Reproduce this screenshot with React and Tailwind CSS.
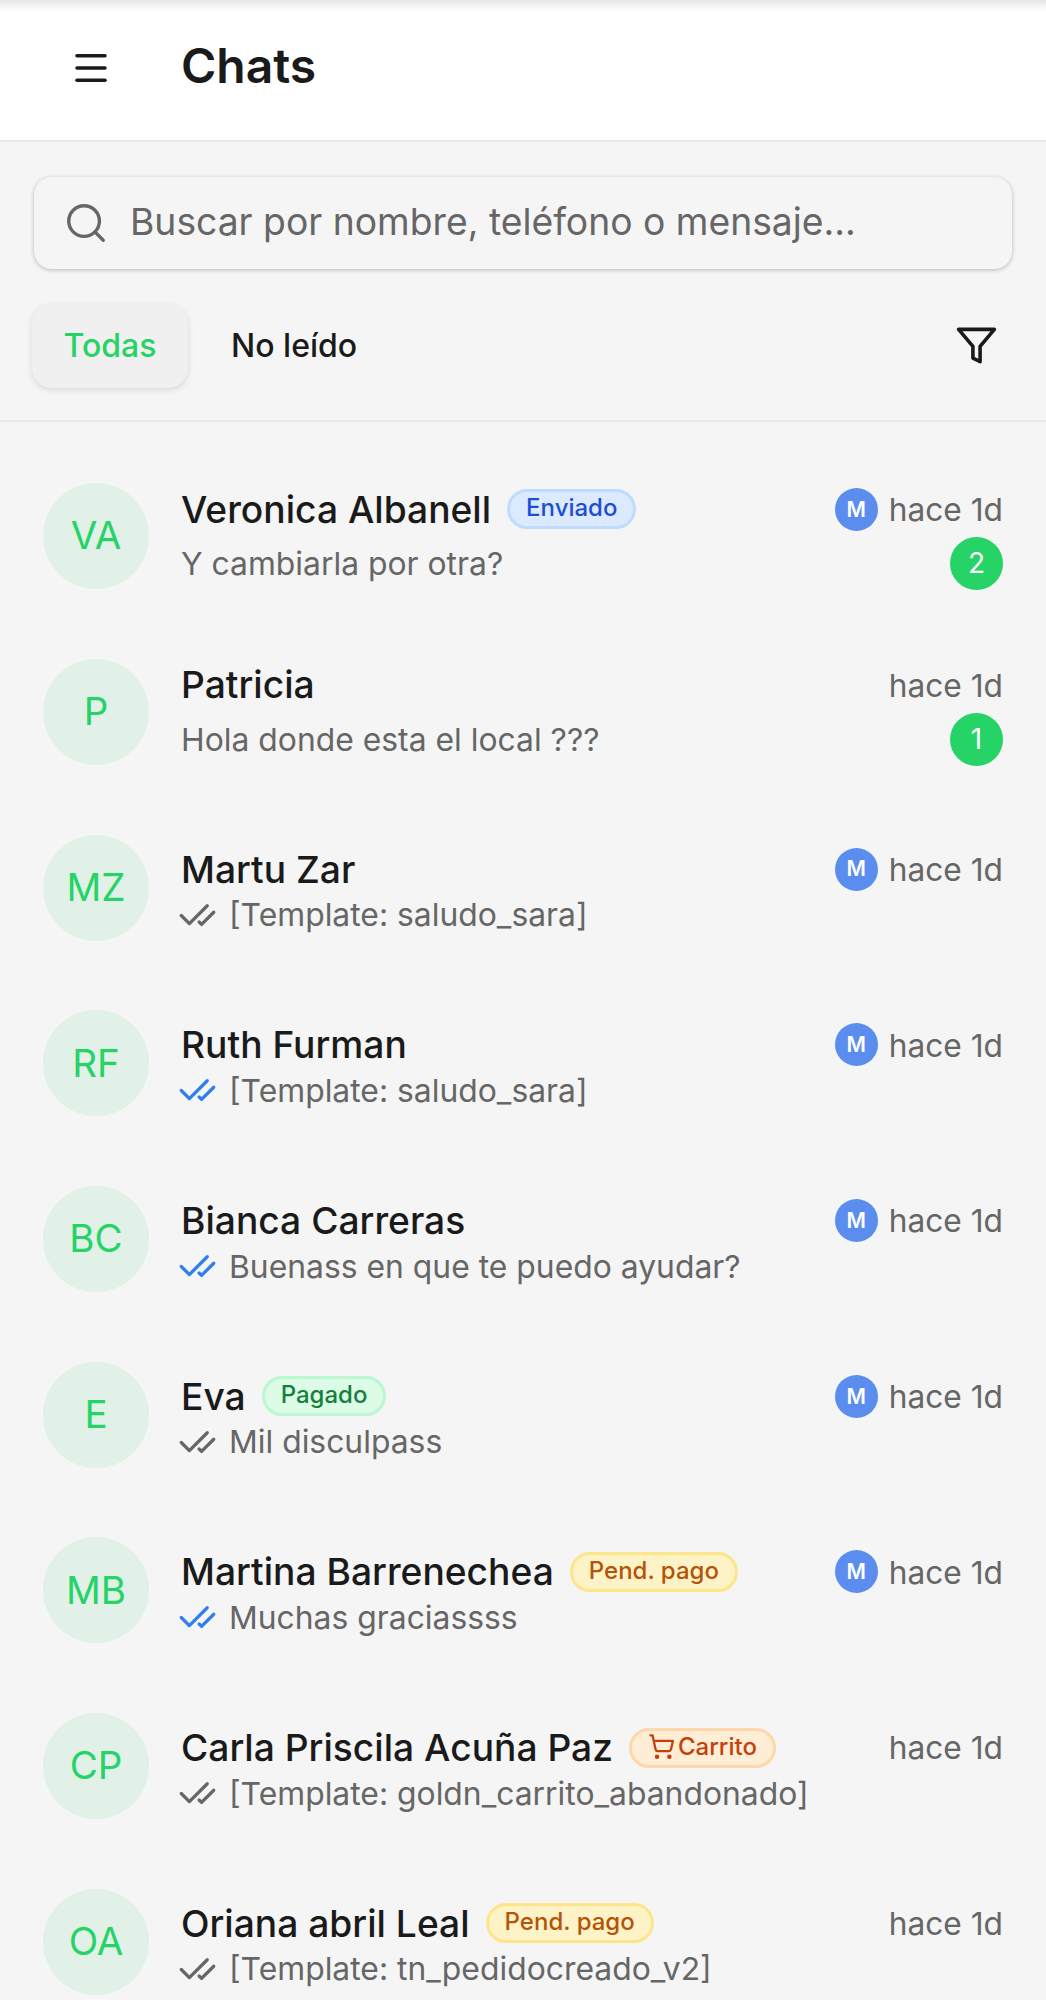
import { CheckCheck, Menu, Search, ShoppingCart } from 'lucide-react'

const chats = [
  { initials: 'VA', name: 'Veronica Albanell', tag: 'enviado', agent: true, message: 'Y cambiarla por otra?', unread: 2 },
  { initials: 'P', name: 'Patricia', message: 'Hola donde esta el local ???', unread: 1 },
  { initials: 'MZ', name: 'Martu Zar', agent: true, check: 'gray', message: '[Template: saludo_sara]' },
  { initials: 'RF', name: 'Ruth Furman', agent: true, check: 'blue', message: '[Template: saludo_sara]' },
  { initials: 'BC', name: 'Bianca Carreras', agent: true, check: 'blue', message: 'Buenass en que te puedo ayudar?' },
  { initials: 'E', name: 'Eva', tag: 'pagado', agent: true, check: 'gray', message: 'Mil disculpass' },
  { initials: 'MB', name: 'Martina Barrenechea', tag: 'pendiente', agent: true, check: 'blue', message: 'Muchas graciassss' },
  { initials: 'CP', name: 'Carla Priscila Acuña Paz', tag: 'carrito', check: 'gray', message: '[Template: goldn_carrito_abandonado]' },
  { initials: 'OA', name: 'Oriana abril Leal', tag: 'pendiente', check: 'gray', message: '[Template: tn_pedidocreado_v2]' },
]

function Tag({ type }) {
  const base = 'ml-[16px] flex h-[40px] items-center rounded-full border-[3px] px-[16px] pb-[2px] text-[24px] font-medium leading-none'
  if (type === 'enviado') {
    return <span className={`${base} border-[#bfdbfe] bg-[#dbeafe] text-[#1d4ed8]`}>Enviado</span>
  }
  if (type === 'pagado') {
    return <span className={`${base} border-[#bbf7d0] bg-[#dcfce7] text-[#15803d]`}>Pagado</span>
  }
  if (type === 'pendiente') {
    return <span className={`${base} border-[#fde68a] bg-[#fef3c7] text-[#b45309]`}>Pend. pago</span>
  }
  return (
    <span className={`${base} gap-[3px] border-[#fed7aa] bg-[#ffedd5] text-[#c2410c]`}>
      <ShoppingCart size={27} strokeWidth={2} />
      Carrito
    </span>
  )
}

function ChatRow({ chat }) {
  const hasUnread = Boolean(chat.unread)

  return (
    <div className="flex h-[175.7px] items-center pl-[43px] pr-[43px]">
      <div className="flex size-[106px] shrink-0 items-center justify-center rounded-full bg-[#e1f1e7] text-[38.5px] text-[#25d366]">
        {chat.initials}
      </div>

      <div className={hasUnread ? 'ml-[32px] mt-[5px] min-w-0 flex-1' : 'ml-[32px] mt-[1px] min-w-0 flex-1'}>
        <div className="flex h-[43px] items-center">
          <span className="text-[37.2px] font-medium leading-none text-[#1a1a1a]">{chat.name}</span>
          {chat.tag && <Tag type={chat.tag} />}
          <div className="ml-auto flex items-center">
            {chat.agent && (
              <span className="mr-[11px] flex size-[43px] items-center justify-center rounded-full bg-[#5b8def] text-[21px] font-semibold text-white">
                M
              </span>
            )}
            <span className="pt-[1px] text-[31.7px] leading-none text-[#666666]">hace 1d</span>
          </div>
        </div>

        <div className={hasUnread ? 'mt-[6px] flex h-[53px] items-center' : 'mt-[11px] flex h-[27px] items-center'}>
          {chat.check && (
            <CheckCheck
              size={39}
              strokeWidth={2}
              className={chat.check === 'blue' ? '-ml-[3px] mr-[12px] shrink-0 text-[#2f80ed]' : '-ml-[3px] mr-[12px] shrink-0 text-[#666666]'}
            />
          )}
          <span className={hasUnread ? 'pt-[2px] text-[31.85px] leading-none text-[#666666]' : 'text-[31.85px] leading-none text-[#666666]'}>
            {chat.message}
          </span>
          {hasUnread && (
            <span className="ml-auto flex size-[53px] items-center justify-center rounded-full bg-[#25d366] text-[28px] text-white">
              {chat.unread}
            </span>
          )}
        </div>
      </div>
    </div>
  )
}

export default function App() {
  return (
    <div className="h-[2000px] overflow-hidden bg-[#f5f5f5] font-['Inter',sans-serif]">
      <header className="flex h-[142px] items-center border-b-2 border-[#e8e8e8] bg-white pb-[4px] pl-[70px] shadow-[inset_0_12px_10px_-8px_rgba(0,0,0,0.12)]">
        <Menu size={42} strokeWidth={2} className="text-[#1a1a1a]" />
        <h1 className="mb-[4px] ml-[69px] text-[48px] font-semibold leading-none text-[#1a1a1a]">Chats</h1>
      </header>

      <div className="border-b-2 border-[#e8e8e8] pb-[32px]">
        <div className="mx-[34px] mt-[35px] flex h-[92px] items-center rounded-[18px] bg-[#f5f5f5] pl-[29px] shadow-[0_1px_4px_rgba(0,0,0,0.25)]">
          <Search size={46} strokeWidth={1.75} className="shrink-0 text-[#666666]" />
          <span className="ml-[21px] pb-[2px] text-[37.25px] leading-none text-[#666666]">Buscar por nombre, teléfono o mensaje...</span>
        </div>

        <div className="mt-[35px] flex items-center pl-[32px] pr-[48px]">
          <button type="button" className="flex h-[84px] w-[156px] items-center justify-center rounded-[20px] bg-[#f0f0f0] text-[32px] font-medium text-[#25d366] shadow-[0_2px_6px_rgba(0,0,0,0.12)]">
            Todas
          </button>
          <button type="button" className="ml-[43px] text-[32px] font-medium text-[#1a1a1a]">
            No leído
          </button>
          <svg className="mb-[2px] ml-auto text-[#1a1a1a]" width="43" height="43" viewBox="0 0 24 24" fill="none" stroke="currentColor" strokeWidth="2" strokeLinecap="round" strokeLinejoin="round">
            <polygon points="22 3 2 3 10 12.46 10 19 14 21 14 12.46 22 3" />
          </svg>
        </div>
      </div>

      <div className="pt-[26.5px]">
        {chats.map((chat) => (
          <ChatRow key={chat.initials} chat={chat} />
        ))}
      </div>
    </div>
  )
}
